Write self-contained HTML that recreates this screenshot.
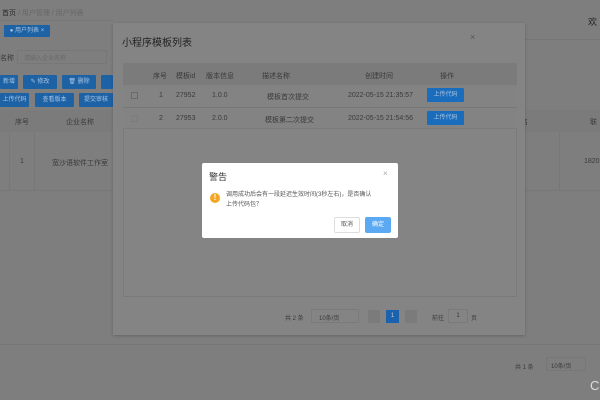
<!DOCTYPE html>
<html><head><meta charset="utf-8"><style>
*{margin:0;padding:0;box-sizing:border-box}
body{width:600px;height:400px;overflow:hidden;background:#7e7e7e;font-family:"Liberation Sans","Noto Sans CJK SC",sans-serif;position:relative;color:#2a2a2a}
.a{position:absolute}
.t{font-size:7px;color:#3a3a3a;white-space:nowrap}
.b{position:absolute;background:#1e62a6;color:#a9c4df;font-size:6px;text-align:center;line-height:14px;height:14px;border-radius:1px}
.ln{position:absolute;background:#777}
</style></head><body>
<div class="a t" style="left:2px;top:8px;color:#2a2a2a">首页 <span style="color:#666">/ 用户管理 / 用户列表</span></div>
<div class="a t" style="left:588px;top:15px;font-size:9px;color:#222">欢</div>
<div class="ln" style="left:520px;top:39px;width:80px;height:1px"></div>
<div class="ln" style="left:0;top:20px;width:113px;height:1px"></div>
<div class="b" style="left:4px;top:25px;width:46px;height:12px;line-height:12px">● 用户列表 ×</div>
<div class="a t" style="left:0;top:53px">名称</div>
<div class="a" style="left:17px;top:50px;width:90px;height:14px;border:1px solid #777"></div>
<div class="a t" style="left:24px;top:53px;font-size:6px;color:#6a6a6a">请输入企业名称</div>
<div class="b" style="left:0;top:75px;width:18px">新增</div>
<div class="b" style="left:23px;top:75px;width:34px">✎ 修改</div>
<div class="b" style="left:62px;top:75px;width:34px">🗑 删除</div>
<div class="b" style="left:101px;top:75px;width:12px"></div>
<div class="b" style="left:0;top:93px;width:29px">上传代码</div>
<div class="b" style="left:35px;top:93px;width:39px">查看版本</div>
<div class="b" style="left:79px;top:93px;width:34px">提交审核</div>
<div class="b" style="left:487px;top:75px;width:38px">手机号授权</div>
<div class="a" style="left:0;top:110px;width:113px;height:22px;background:#7b7b7b"></div>
<div class="a" style="left:525px;top:110px;width:75px;height:22px;background:#7b7b7b"></div>
<div class="a t" style="left:15px;top:117px">序号</div>
<div class="a t" style="left:66px;top:117px">企业名称</div>
<div class="a t" style="left:500px;top:117px">法人姓名</div>
<div class="a t" style="left:590px;top:117px">联</div>
<div class="ln" style="left:9px;top:132px;width:1px;height:58px"></div>
<div class="ln" style="left:34px;top:132px;width:1px;height:58px"></div>
<div class="ln" style="left:559px;top:132px;width:1px;height:58px"></div>
<div class="a t" style="left:20px;top:158px">1</div>
<div class="a t" style="left:52px;top:158px">宽沙语软件工作室</div>
<div class="a t" style="left:504px;top:158px">宽沙语</div>
<div class="a t" style="left:584px;top:158px">1820</div>
<div class="ln" style="left:0;top:190px;width:113px;height:1px"></div>
<div class="ln" style="left:525px;top:190px;width:75px;height:1px"></div>
<div class="ln" style="left:0;top:344px;width:600px;height:1px"></div>
<div class="a t" style="left:515px;top:362px;font-size:6px">共 1 条</div>
<div class="a" style="left:546px;top:357px;width:40px;height:14px;border:1px solid #777"></div>
<div class="a t" style="left:551px;top:361px;font-size:6px">10条/页</div>
<div class="a t" style="left:590px;top:378px;font-size:13px;color:#ddd">C</div>
<div class="a" style="left:113px;top:23px;width:412px;height:312px;background:#848484;box-shadow:0 1px 3px rgba(0,0,0,.2)"></div>
<div class="a t" style="left:122px;top:34px;font-size:10px;color:#222">小程序模板列表</div>
<div class="a t" style="left:470px;top:32px;font-size:9px;color:#555">×</div>
<div class="a" style="left:123px;top:63px;width:394px;height:22px;background:#7b7b7b"></div>
<div class="a" style="left:123px;top:85px;width:394px;height:44px;background:#838383;border-bottom:1px solid #7a7a7a"></div>
<div class="ln" style="left:123px;top:107px;width:394px;height:1px"></div>
<div class="a" style="left:123px;top:129px;width:394px;height:168px;border:1px solid #7a7a7a;border-top:none"></div>
<div class="a t" style="left:153px;top:71px">序号</div>
<div class="a t" style="left:176px;top:71px">模板id</div>
<div class="a t" style="left:206px;top:71px">版本信息</div>
<div class="a t" style="left:262px;top:71px">描述名称</div>
<div class="a t" style="left:365px;top:71px">创建时间</div>
<div class="a t" style="left:440px;top:71px">操作</div>
<div class="a" style="left:131px;top:92px;width:7px;height:7px;border:1px solid #6a6a6a"></div>
<div class="a" style="left:131px;top:115px;width:7px;height:7px;border:1px solid #7c7c7c"></div>
<div class="a t" style="left:159px;top:92px">1</div>
<div class="a t" style="left:176px;top:92px">27952</div>
<div class="a t" style="left:212px;top:92px">1.0.0</div>
<div class="a t" style="left:267px;top:92px">模板首次提交</div>
<div class="a t" style="left:348px;top:92px">2022-05-15 21:35:57</div>
<div class="a t" style="left:159px;top:115px">2</div>
<div class="a t" style="left:176px;top:115px">27953</div>
<div class="a t" style="left:212px;top:115px">2.0.0</div>
<div class="a t" style="left:265px;top:115px">模板第二次提交</div>
<div class="a t" style="left:348px;top:115px">2022-05-15 21:54:56</div>
<div class="b" style="left:427px;top:88px;width:37px;background:#1a6cbd">上传代码</div>
<div class="b" style="left:427px;top:111px;width:37px;background:#1a6cbd">上传代码</div>
<div class="a t" style="left:285px;top:313px;font-size:6px">共 2 条</div>
<div class="a" style="left:311px;top:309px;width:48px;height:14px;border:1px solid #7a7a7a"></div>
<div class="a t" style="left:319px;top:313px;font-size:6px">10条/页</div>
<div class="a" style="left:368px;top:310px;width:12px;height:13px;background:#7b7b7b"></div>
<div class="a" style="left:386px;top:310px;width:13px;height:13px;background:#1a62ad;color:#ccc;font-size:6px;text-align:center;line-height:13px">1</div>
<div class="a" style="left:405px;top:310px;width:12px;height:13px;background:#7b7b7b"></div>
<div class="a t" style="left:432px;top:313px;font-size:6px">前往</div>
<div class="a" style="left:448px;top:309px;width:20px;height:14px;border:1px solid #7a7a7a;font-size:6px;text-align:center;line-height:12px;color:#333">1</div>
<div class="a t" style="left:471px;top:313px;font-size:6px">页</div>
<div class="a" style="left:202px;top:163px;width:196px;height:75px;background:#fff;border-radius:2px"></div>
<div class="a t" style="left:209px;top:170px;font-size:9px;color:#333">警告</div>
<div class="a t" style="left:383px;top:169px;font-size:8px;color:#aaa">×</div>
<div class="a" style="left:210px;top:193px;width:10px;height:10px;border-radius:50%;background:#f5a623;color:#fff;font-size:8px;font-weight:bold;text-align:center;line-height:10px">!</div>
<div class="a t" style="left:226px;top:190px;font-size:6px;color:#555;line-height:10px">调用成功后会有一段延迟生效时间(3秒左右)，是否确认<br>上传代码包？</div>
<div class="a" style="left:334px;top:217px;width:26px;height:16px;border:1px solid #ddd;border-radius:2px;font-size:6px;text-align:center;line-height:14px;color:#555">取消</div>
<div class="a" style="left:365px;top:217px;width:26px;height:16px;background:#5aa9f2;border-radius:2px;font-size:6px;text-align:center;line-height:16px;color:#fff">确定</div>
</body></html>
